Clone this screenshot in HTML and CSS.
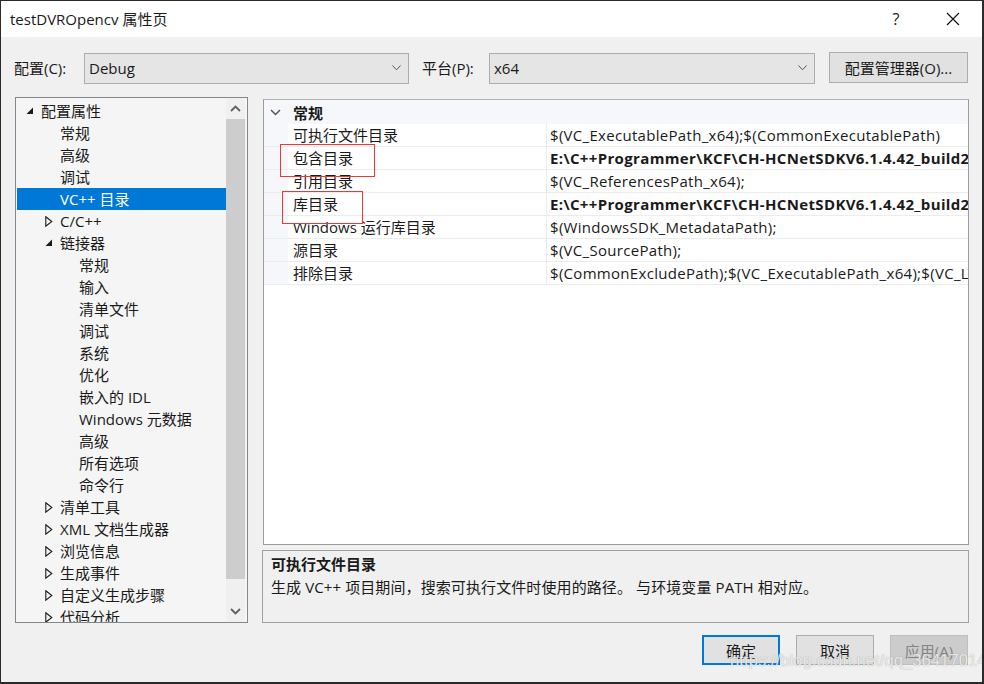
FILE: index.html
```html
<!DOCTYPE html>
<html lang="zh">
<head>
<meta charset="utf-8">
<title>testDVROpencv 属性页</title>
<link rel="stylesheet" href="styles.css">
</head>
<body>
<div class="window">
  <div class="titlebar">
    <span class="title">testDVROpencv 属性页</span>
    <span class="help">?</span>
    <span class="close"><svg width="14" height="14" viewBox="0 0 14 14"><path d="M1 1L13 13M13 1L1 13" stroke="#111" stroke-width="1.2" fill="none"/></svg></span>
  </div>

  <div class="configrow">
    <span class="lbl">配置(C):</span>
    <div class="combo combo-cfg"><span>Debug</span><svg class="chev" width="9" height="6" viewBox="0 0 9 6"><path d="M0.5 0.5L4.5 4.8L8.5 0.5" stroke="#555" stroke-width="1" fill="none"/></svg></div>
    <span class="lbl lbl-plat">平台(P):</span>
    <div class="combo combo-plat"><span>x64</span><svg class="chev" width="9" height="6" viewBox="0 0 9 6"><path d="M0.5 0.5L4.5 4.8L8.5 0.5" stroke="#555" stroke-width="1" fill="none"/></svg></div>
    <div class="cfgbtn">配置管理器(O)...</div>
  </div>

  <div class="main">
    <div class="tree">
      <div class="tree-list">
        <div class="row l0"><svg class="exp" width="8" height="8" viewBox="0 0 8 8"><path d="M7 0.5V7H0.5Z" fill="#1a1a1a"/></svg><span>配置属性</span></div>
        <div class="row l1">常规</div>
        <div class="row l1">高级</div>
        <div class="row l1">调试</div>
        <div class="row l1 sel">VC++ 目录</div>
        <div class="row l1e"><svg class="exp" width="8" height="11" viewBox="0 0 8 11"><path d="M0.8 0.8L6.8 5.5L0.8 10.2Z" fill="none" stroke="#1a1a1a" stroke-width="1.1"/></svg><span>C/C++</span></div>
        <div class="row l1e"><svg class="exp" width="8" height="8" viewBox="0 0 8 8"><path d="M7 0.5V7H0.5Z" fill="#1a1a1a"/></svg><span>链接器</span></div>
        <div class="row l2">常规</div>
        <div class="row l2">输入</div>
        <div class="row l2">清单文件</div>
        <div class="row l2">调试</div>
        <div class="row l2">系统</div>
        <div class="row l2">优化</div>
        <div class="row l2">嵌入的 IDL</div>
        <div class="row l2">Windows 元数据</div>
        <div class="row l2">高级</div>
        <div class="row l2">所有选项</div>
        <div class="row l2">命令行</div>
        <div class="row l1e"><svg class="exp" width="8" height="11" viewBox="0 0 8 11"><path d="M0.8 0.8L6.8 5.5L0.8 10.2Z" fill="none" stroke="#1a1a1a" stroke-width="1.1"/></svg><span>清单工具</span></div>
        <div class="row l1e"><svg class="exp" width="8" height="11" viewBox="0 0 8 11"><path d="M0.8 0.8L6.8 5.5L0.8 10.2Z" fill="none" stroke="#1a1a1a" stroke-width="1.1"/></svg><span>XML 文档生成器</span></div>
        <div class="row l1e"><svg class="exp" width="8" height="11" viewBox="0 0 8 11"><path d="M0.8 0.8L6.8 5.5L0.8 10.2Z" fill="none" stroke="#1a1a1a" stroke-width="1.1"/></svg><span>浏览信息</span></div>
        <div class="row l1e"><svg class="exp" width="8" height="11" viewBox="0 0 8 11"><path d="M0.8 0.8L6.8 5.5L0.8 10.2Z" fill="none" stroke="#1a1a1a" stroke-width="1.1"/></svg><span>生成事件</span></div>
        <div class="row l1e"><svg class="exp" width="8" height="11" viewBox="0 0 8 11"><path d="M0.8 0.8L6.8 5.5L0.8 10.2Z" fill="none" stroke="#1a1a1a" stroke-width="1.1"/></svg><span>自定义生成步骤</span></div>
        <div class="row l1e"><svg class="exp" width="8" height="11" viewBox="0 0 8 11"><path d="M0.8 0.8L6.8 5.5L0.8 10.2Z" fill="none" stroke="#1a1a1a" stroke-width="1.1"/></svg><span>代码分析</span></div>
      </div>
      <div class="vscroll">
        <div class="sarrow"><svg width="11" height="7" viewBox="0 0 11 7"><path d="M1 6L5.5 1.5L10 6" stroke="#606060" stroke-width="1.8" fill="none"/></svg></div>
        <div class="sthumb"></div>
        <div class="strack"></div>
        <div class="sarrow"><svg width="11" height="7" viewBox="0 0 11 7"><path d="M1 1L5.5 5.5L10 1" stroke="#606060" stroke-width="1.8" fill="none"/></svg></div>
      </div>
    </div>

    <div class="rightcol">
      <div class="grid">
        <div class="ghead"><svg class="gchev" width="11" height="7" viewBox="0 0 11 7"><path d="M1 1L5.5 5.5L10 1" stroke="#555" stroke-width="1.5" fill="none"/></svg><span>常规</span></div>
        <div class="grow"><span class="gname">可执行文件目录</span><span class="gval">$(VC_ExecutablePath_x64);$(CommonExecutablePath)</span></div>
        <div class="grow"><span class="gname">包含目录</span><span class="gval b">E:\C++Programmer\KCF\CH-HCNetSDKV6.1.4.42_build20200527_win64\include;$(IncludePath)</span></div>
        <div class="grow"><span class="gname">引用目录</span><span class="gval">$(VC_ReferencesPath_x64);</span></div>
        <div class="grow"><span class="gname">库目录</span><span class="gval b">E:\C++Programmer\KCF\CH-HCNetSDKV6.1.4.42_build20200527_win64\lib;$(LibraryPath)</span></div>
        <div class="grow"><span class="gname">Windows 运行库目录</span><span class="gval">$(WindowsSDK_MetadataPath);</span></div>
        <div class="grow"><span class="gname">源目录</span><span class="gval">$(VC_SourcePath);</span></div>
        <div class="grow"><span class="gname">排除目录</span><span class="gval">$(CommonExcludePath);$(VC_ExecutablePath_x64);$(VC_LibraryPath_x64)</span></div>
      </div>
      <div class="desc">
        <div class="dtitle">可执行文件目录</div>
        <div class="dtext">生成 VC++ 项目期间，搜索可执行文件时使用的路径。 与环境变量 PATH 相对应。</div>
      </div>
    </div>
  </div>

  <div class="buttons">
    <div class="btn default">确定</div>
    <div class="btn">取消</div>
    <div class="btn disabled">应用(A)</div>
  </div>

  <div class="mark mark1"></div>
  <div class="mark mark2"></div>
  <div class="watermark">https://blog.csdn.net/qq_36417014</div>
</div>
</body>
</html>
```

FILE: styles.css
```css
* { box-sizing: border-box; }
html, body { margin: 0; padding: 0; }
body {
  width: 984px;
  height: 684px;
  overflow: hidden;
  background: #f0f0f0;
  font-family: "Open Sans", "Noto Sans CJK SC", sans-serif;
  font-size: 15px;
  color: #1a1a1a;
}
.window {
  position: relative;
  width: 984px;
  height: 684px;
  border: 1px solid #2b2b2b;
  border-right-width: 2px;
  border-bottom-width: 2px;
  background: #f0f0f0;
  display: flex;
  flex-direction: column;
  overflow: hidden;
}
.titlebar {
  height: 36px;
  background: #fff;
  display: flex;
  align-items: center;
  padding-left: 9px;
  flex: none;
}
.title { flex: 1; font-size: 15px; line-height: 20px; }
.help { width: 20px; text-align: center; font-size: 16px; margin-right: 40px; }
.close { width: 14px; height: 14px; display: flex; margin-right: 22px; }

.configrow {
  display: flex;
  align-items: center;
  margin-top: 15px;
  height: 32px;
  padding-left: 13px;
  flex: none;
}
.lbl { width: 70px; line-height: 20px; }
.lbl-plat { width: 67px; margin-left: 13px; }
.combo {
  height: 31px;
  border: 1px solid #acacac;
  background: #e5e5e5;
  display: flex;
  align-items: center;
  padding-left: 4px;
  padding-right: 7px;
  justify-content: space-between;
}
.combo-cfg { width: 325px; }
.combo-plat { width: 326px; }
.cfgbtn {
  width: 139px;
  height: 31px;
  margin-left: 14px;
  margin-top: -2px;
  border: 1px solid #adadad;
  background: #e1e1e1;
  display: flex;
  align-items: center;
  justify-content: center;
}

.main {
  display: grid;
  grid-template-columns: 233px 707px;
  column-gap: 14px;
  margin-top: 13px;
  padding-left: 14px;
  flex: none;
  height: 526px;
}
.tree {
  border: 1px solid #828790;
  background: #f5f5f5;
  display: flex;
  height: 526px;
  overflow: hidden;
}
.tree-list {
  width: 210px;
  padding-top: 2px;
  overflow: hidden;
}
.row {
  height: 22px;
  display: flex;
  align-items: center;
  white-space: nowrap;
  line-height: 22px;
  margin-left: 1px;
}
.row.l0 { padding-left: 9px; }
.row.l1 { padding-left: 43px; }
.row.l1e { padding-left: 28px; }
.row.l2 { padding-left: 62px; }
.row .exp { width: 15px; flex: none; padding-right: 7px; }
.row.sel { background: #0078d7; color: #fff; }

.vscroll {
  width: 19px;
  background: #f0f0f0;
  display: flex;
  flex-direction: column;
}
.sarrow {
  height: 21px;
  display: flex;
  align-items: center;
  justify-content: center;
  flex: none;
}
.sthumb { height: 460px; background: #cdcdcd; flex: none; }
.strack { flex: 1; }

.rightcol { display: flex; flex-direction: column; }
.grid {
  margin-top: 2px;
  margin-left: 1px;
  height: 446px;
  border: 1px solid #9a9a9a;
  border-top-color: #b0b0b0;
  background: #fff;
  overflow: hidden;
}
.ghead {
  height: 24px;
  background: #f5f7fa;
  display: flex;
  align-items: center;
  font-weight: bold;
  padding-left: 6px;
  padding-top: 1px;
}
.gchev { margin-right: 12px; }
.grow {
  height: 23px;
  display: grid;
  grid-template-columns: 24px 259px 1fr;
  border-bottom: 1px solid #ececec;
  white-space: nowrap;
}
.grow::before { content: ""; background: #f5f7fa; }
.gname {
  padding-left: 5px;
  line-height: 22px;
  border-right: 1px solid #ececec;
  overflow: hidden;
}
.gval {
  padding-left: 3px;
  line-height: 22px;
  overflow: hidden;
  letter-spacing: 0.3px;
}
.gval.b { font-weight: bold; letter-spacing: 0.35px; }

.desc {
  margin-top: 5px;
  height: 73px;
  border: 1px solid #a0a0a0;
  background: #f0f0f0;
  padding: 2px 8px;
}
.dtitle { font-weight: bold; line-height: 22px; }
.dtext { line-height: 24px; letter-spacing: 0.1px; }

.buttons {
  display: flex;
  justify-content: flex-end;
  gap: 16px;
  margin-top: 12px;
  padding-right: 14px;
  flex: none;
}
.btn {
  width: 78px;
  height: 30px;
  border: 1px solid #adadad;
  background: #e1e1e1;
  display: flex;
  align-items: center;
  justify-content: center;
}
.btn.default { border: 2px solid #0078d7; }
.btn.disabled { background: #cccccc; border-color: #bfbfbf; color: #838383; }

.mark {
  position: absolute;
  border: 1px solid #e5393a;
}
.mark1 { left: 279px; top: 143px; width: 95px; height: 33px; }
.mark2 { left: 281px; top: 190px; width: 81px; height: 33px; }

.watermark {
  position: absolute;
  left: 729px;
  top: 650px;
  font-family: "Liberation Sans", Arial, sans-serif;
  font-size: 16.5px;
  color: rgba(255, 255, 255, 0.8);
  text-shadow: 0 0 1px rgba(110, 110, 110, 0.7);
  white-space: nowrap;
  letter-spacing: 0.1px;
}
```
